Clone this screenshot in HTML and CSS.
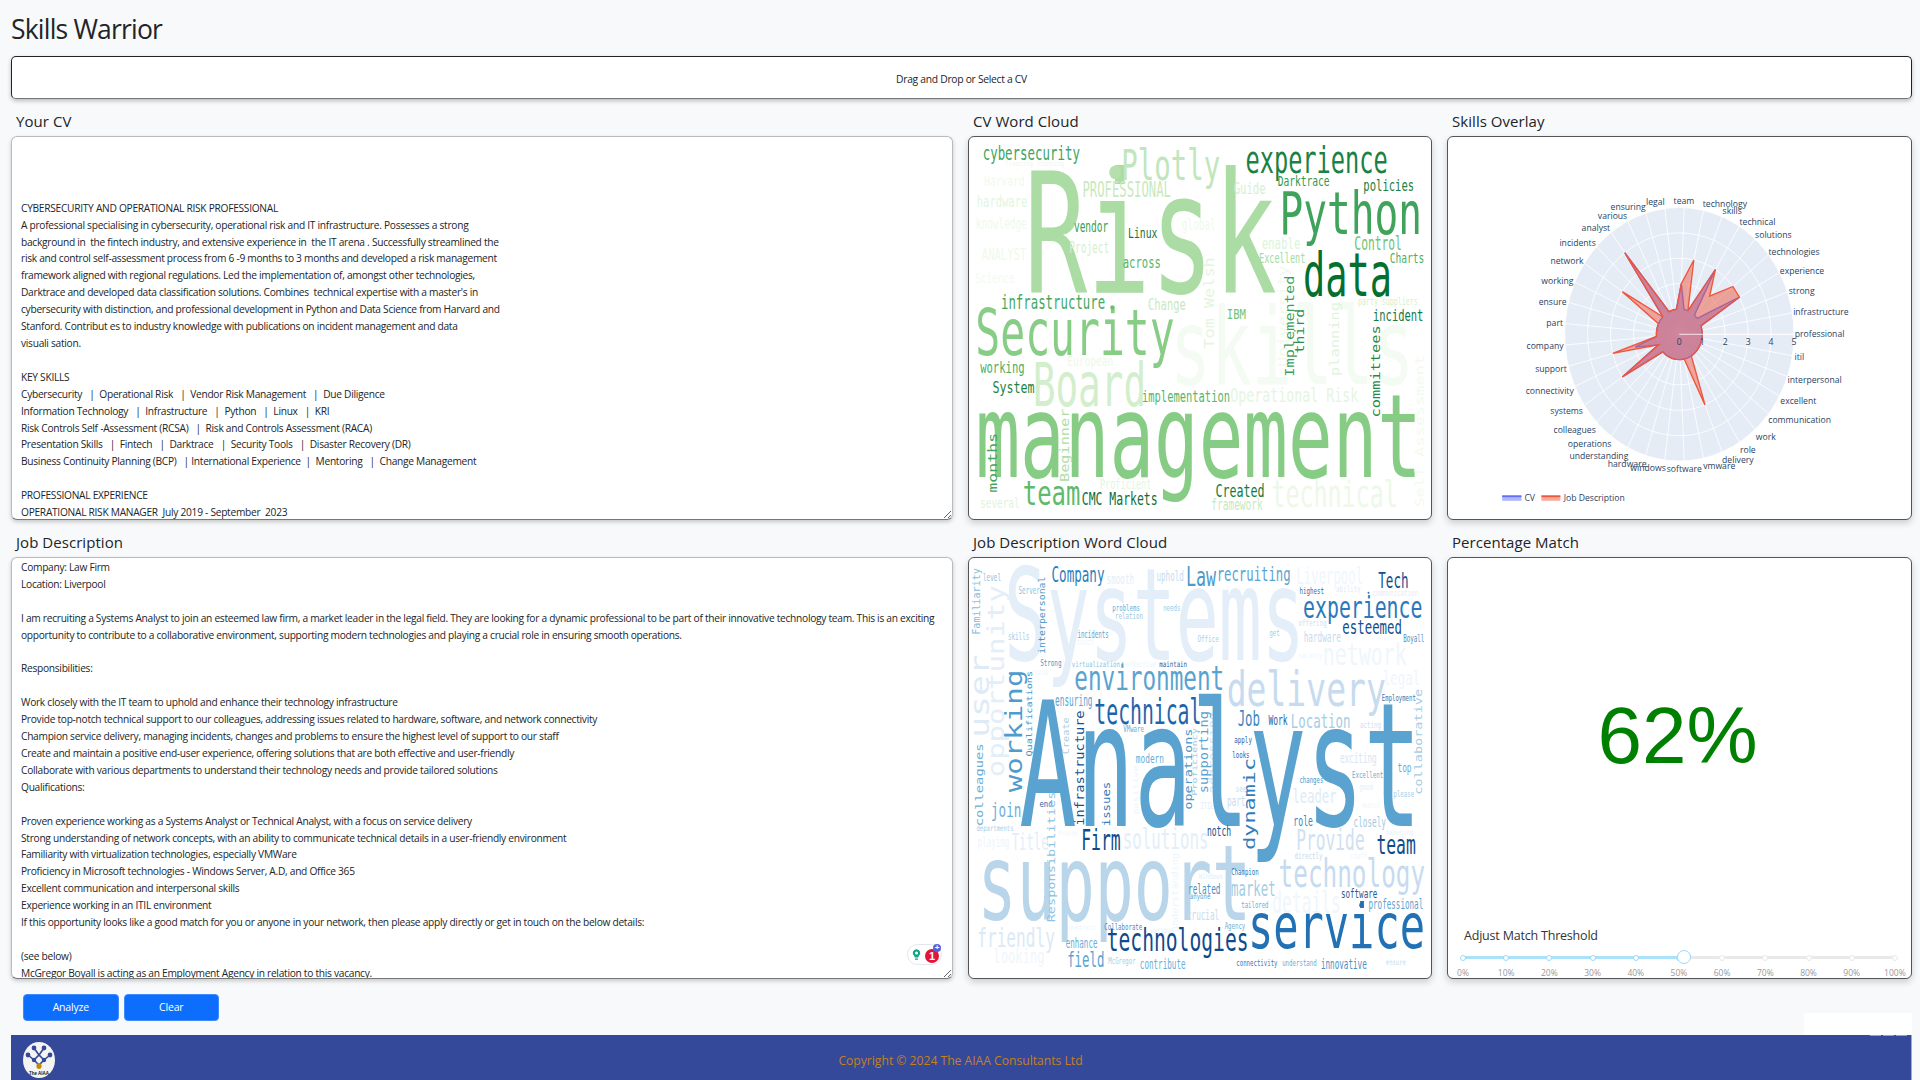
FILE: index.html
```html
<!DOCTYPE html>
<html lang="en">
<head>
<meta charset="utf-8">
<title>Skills Warrior</title>
<link rel="stylesheet" href="styles.css">
</head>
<body>
<div class="app">
  <h1 class="title">Skills Warrior</h1>
  <div class="dropzone">Drag and Drop or Select a CV</div>
  <div class="grid">
    <section class="panel">
      <h2 class="heading">Your CV</h2>
      <div class="card text-card cv-text">


CYBERSECURITY AND OPERATIONAL RISK PROFESSIONAL
A professional specialising in cybersecurity, operational risk and IT infrastructure. Possesses a strong
background in  the fintech industry, and extensive experience in  the IT arena . Successfully streamlined the
risk and control self-assessment process from 6 -9 months to 3 months and developed a risk management
framework aligned with regional regulations. Led the implementation of, amongst other technologies,
Darktrace and developed data classification solutions. Combines  technical expertise with a master's in
cybersecurity with distinction, and professional development in Python and Data Science from Harvard and
Stanford. Contribut es to industry knowledge with publications on incident management and data
visuali sation.

KEY SKILLS
Cybersecurity   |  Operational Risk   |  Vendor Risk Management   |  Due Diligence
Information Technology   |  Infrastructure   |  Python   |  Linux   |  KRI
Risk Controls Self -Assessment (RCSA)   |  Risk and Controls Assessment (RACA)
Presentation Skills   |  Fintech   |  Darktrace   |  Security Tools   |  Disaster Recovery (DR)
Business Continuity Planning (BCP)   | International Experience  |  Mentoring   |  Change Management

PROFESSIONAL EXPERIENCE
OPERATIONAL RISK MANAGER  July 2019 - September  2023</div>
    </section>
    <section class="panel">
      <h2 class="heading">CV Word Cloud</h2>
      <div class="card chart-card"><svg id="cloud-cv" class="chart" viewBox="25 48 1390 1154" preserveAspectRatio="none"></svg></div>
    </section>
    <section class="panel">
      <h2 class="heading">Skills Overlay</h2>
      <div class="card chart-card"><svg id="radar" class="chart" viewBox="22 48 1393 1154" preserveAspectRatio="none"></svg></div>
    </section>
    <section class="panel">
      <h2 class="heading">Job Description</h2>
      <div class="jd-wrap">
        <div class="card text-card jd-text">Company: Law Firm
Location: Liverpool

I am recruiting a Systems Analyst to join an esteemed law firm, a market leader in the legal field. They are looking for a dynamic professional to be part of their innovative technology team. This is an exciting
opportunity to contribute to a collaborative environment, supporting modern technologies and playing a crucial role in ensuring smooth operations.

Responsibilities:

Work closely with the IT team to uphold and enhance their technology infrastructure
Provide top-notch technical support to our colleagues, addressing issues related to hardware, software, and network connectivity
Champion service delivery, managing incidents, changes and problems to ensure the highest level of support to our staff
Create and maintain a positive end-user experience, offering solutions that are both effective and user-friendly
Collaborate with various departments to understand their technology needs and provide tailored solutions
Qualifications:

Proven experience working as a Systems Analyst or Technical Analyst, with a focus on service delivery
Strong understanding of network concepts, with an ability to communicate technical details in a user-friendly environment
Familiarity with virtualization technologies, especially VMWare
Proficiency in Microsoft technologies - Windows Server, A.D, and Office 365
Excellent communication and interpersonal skills
Experience working in an ITIL environment
If this opportunity looks like a good match for you or anyone in your network, then please apply directly or get in touch on the below details:

(see below)
McGregor Boyall is acting as an Employment Agency <span class="flag">in relation to</span> this vacancy.</div>
        <div class="assist">
          <svg class="assist-bulb" viewBox="0 0 12 16"><path d="M6 1a5 5 0 0 0-3 9l.8 2h4.4l.8-2A5 5 0 0 0 6 1zm0 3a2 2 0 1 1 0 4 2 2 0 0 1 0-4zM4 13.2h4V15H4z"/></svg>
          <span class="assist-count">1</span>
          <span class="assist-plus">+</span>
        </div>
      </div>
    </section>
    <section class="panel">
      <h2 class="heading">Job Description Word Cloud</h2>
      <div class="card chart-card"><svg id="cloud-jd" class="chart" viewBox="25 22 1390 1268" preserveAspectRatio="none"></svg></div>
    </section>
    <section class="panel">
      <h2 class="heading">Percentage Match</h2>
      <div class="card match-card">
        <div class="match-value">62%</div>
        <div class="threshold">
          <div class="threshold-label">Adjust Match Threshold</div>
          <div class="slider">
            <div class="rail"></div>
            <div class="rail-active"></div>
            <div class="marks">
              <div class="mark on"><i></i><span>0%</span></div>
              <div class="mark on"><i></i><span>10%</span></div>
              <div class="mark on"><i></i><span>20%</span></div>
              <div class="mark on"><i></i><span>30%</span></div>
              <div class="mark on"><i></i><span>40%</span></div>
              <div class="mark on"><i></i><span>50%</span></div>
              <div class="mark"><i></i><span>60%</span></div>
              <div class="mark"><i></i><span>70%</span></div>
              <div class="mark"><i></i><span>80%</span></div>
              <div class="mark"><i></i><span>90%</span></div>
              <div class="mark"><i></i><span>100%</span></div>
            </div>
            <div class="handle"></div>
          </div>
        </div>
      </div>
    </section>
  </div>
  <div class="actions">
    <div class="buttons">
      <button class="btn">Analyze</button>
      <button class="btn">Clear</button>
    </div>
    <div class="stub"></div>
  </div>
  <footer class="footer">
    <svg class="logo" viewBox="0 0 32 36">
      <ellipse cx="16" cy="18" rx="16" ry="18" fill="#f4f4f2"/>
      <g stroke="#35499b" stroke-width="1.6" fill="#35499b">
        <path d="M5 13l6 5 5-5 5 5 6-5M11 6l5 7 5-7M16 13l-5 5M16 13l5 5M11 18l5 5 5-5" fill="none"/>
        <circle cx="5" cy="13" r="1.6"/><circle cx="27" cy="13" r="1.6"/>
        <circle cx="11" cy="6" r="1.6"/><circle cx="21" cy="6" r="1.6"/>
        <circle cx="11" cy="18" r="1.4"/><circle cx="21" cy="18" r="1.4"/>
      </g>
      <ellipse cx="16" cy="24" rx="2.6" ry="3" fill="#c08a10"/>
      <text x="16" y="32.5" class="logo-text">The AIAA</text>
    </svg>
    <div class="copyright">Copyright © 2024 The AIAA Consultants Ltd</div>
    <div class="dashes"><i></i><i></i><i></i></div>
  </footer>
</div>
<script src="script.js"></script>
</body>
</html>
```
FILE: styles.css
```css
* { box-sizing: border-box; }
html, body { margin: 0; height: 100%; overflow: hidden; }
body {
  background: #f8f9fa;
  color: #212529;
  font-family: "Open Sans", "Noto Sans", "Liberation Sans", sans-serif;
}
.app { width: 1920px; height: 1080px; padding: 0 8px 0 11px; display: flex; flex-direction: column; }
.title { margin: 0; height: 56px; font-size: 26.5px; font-weight: 500; line-height: 58px; letter-spacing: -0.8px; }
.dropzone {
  height: 43px; display: flex; align-items: center; justify-content: center;
  background: #fff; border: 1px solid #222; border-bottom-color: #777; border-radius: 5px;
  box-shadow: 0 2px 4px rgba(0,0,0,.25);
  font-size: 10.3px; letter-spacing: -0.28px; padding-top: 2px;
}
.grid {
  display: grid; grid-template-columns: 942px 464px 465px; grid-template-rows: 421px 459px;
  column-gap: 15px;
}
.panel { display: flex; flex-direction: column; min-height: 0; }
.heading { margin: 0; height: 37px; padding: 12px 0 0 5px; font-size: 15px; font-weight: 400; line-height: 20px; letter-spacing: 0.05px; color: #212529; }
.card { flex: 1; min-height: 0; background: #fff; border-radius: 6px; overflow: hidden; }
.chart-card, .match-card { border: 1px solid #555; box-shadow: 0 3px 7px rgba(0,0,0,.18); }
.text-card {
  border: 1px solid #bbb; border-bottom-color: #777;
  box-shadow: 0 2px 4px rgba(0,0,0,.2);
  padding: 1px 9px 0; font-size: 10.2px; line-height: 16.9px; white-space: pre; resize: both; letter-spacing: -0.28px;
}
.cv-text { padding-top: 12px; }
.jd-wrap { position: relative; flex: 1; min-height: 0; display: flex; }
.jd-wrap .text-card { width: 100%; }
.flag { text-decoration: underline; text-decoration-color: #a9c7f5; text-underline-offset: 3px; }
.assist {
  position: absolute; left: 896px; top: 387px; width: 35px; height: 21px; border-radius: 11px;
  background: #fff; border: 1px solid #e4e6ee; display: flex; align-items: center; padding-left: 4px; gap: 4px;
}
.assist-bulb { width: 9px; height: 13px; fill: #11a683; }
.assist-count {
  width: 14px; height: 14px; border-radius: 50%; background: #e0163a; color: #fff; margin-top: 2px;
  font: 700 11px/14px "Liberation Sans", sans-serif; text-align: center;
}
.assist-plus {
  position: absolute; right: 0; top: -1px; width: 8px; height: 8px; border-radius: 50%; background: #5a5fd8;
  color: #fff; font: 700 8px/8px "Liberation Sans", sans-serif; text-align: center;
}
.chart { display: block; width: 100%; height: 100%; }
.cw { font-family: "DejaVu Sans Mono", monospace; }
.axis-label { font-family: "Open Sans", sans-serif; font-size: 26px; fill: #2a3f5f; text-anchor: middle; }
.legend-label { font-family: "Open Sans", sans-serif; font-size: 26px; fill: #2a3f5f; }
.match-card { display: flex; flex-direction: column; }
.match-value {
  flex: 1; display: flex; align-items: center; justify-content: center;
  font-family: "Liberation Sans", sans-serif; font-size: 80px; color: #008000; padding: 0 4px 13px 0;
}
.threshold { height: 51px; padding: 0 16px 0 15px; }
.threshold-label { font-size: 12.5px; line-height: 18px; margin-left: 1px; letter-spacing: -0.2px; color: #333; }
.slider { position: relative; height: 30px; margin-top: 7px; }
.rail, .rail-active { position: absolute; top: 4px; height: 3px; border-radius: 2px; left: 0; }
.rail { right: 0; background: #e9e9e9; }
.rail-active { width: 51%; background: #abe2fb; }
.marks { position: relative; display: flex; justify-content: space-between; }
.mark { width: 0; display: flex; flex-direction: column; align-items: center; }
.mark i { flex: none; width: 6px; height: 6px; margin-top: 3px; border-radius: 50%; background: #fff; border: 1px solid #e9e9e9; }
.mark.on i { border: 1.5px solid #96dbfa; }
.mark span { margin-top: 6px; font-size: 8.5px; line-height: 12px; color: #999; white-space: nowrap; }
.handle {
  position: absolute; top: -2px; left: 51%; width: 14px; height: 14px; margin-left: -6px;
  background: #fff; border: 1.5px solid #96dbfa; border-radius: 50%;
}
.actions { height: 56px; display: flex; justify-content: space-between; align-items: flex-start; }
.buttons { display: flex; gap: 5px; margin: 15px 0 0 12px; }
.btn {
  width: 95.5px; height: 27px; background: #0d6efd; color: #fff; border: 1px solid #3d8bfd; border-radius: 4px;
  font: 10.5px/1 "Open Sans", sans-serif; letter-spacing: -0.2px; padding: 0;
}
.stub { width: 108px; height: 22px; margin-top: 34px; background: #fff; }
.footer {
  position: relative; flex: none; height: 45px; background: #35499b; border-right: 1px solid #a0a8d0;
  display: flex; align-items: center; justify-content: center;
}
.logo { position: absolute; left: 12px; top: 7px; width: 32px; height: 36px; }
.logo-text { font: 700 4.5px "Liberation Sans", sans-serif; text-anchor: middle; fill: #111; }
.copyright { font-size: 12.2px; color: #c2801f; letter-spacing: -0.03px; margin-top: 5px; margin-left: -1px; }
.dashes { position: absolute; top: 0; right: 4px; display: flex; gap: 2px; }
.dashes i { width: 11px; height: 1px; background: #6fb0e8; }
```
FILE: script.js
```js
var NS = "http://www.w3.org/2000/svg";
function el(tag, attrs, parent, text) {
  var n = document.createElementNS(NS, tag);
  for (var k in attrs) n.setAttribute(k, attrs[k]);
  if (text) n.textContent = text;
  parent.appendChild(n);
  return n;
}
// horizontal word: [text, x0, x1, baseline, size, colour]
// vertical word:   [text, baselineX, yStart, yEnd, size, colour, 1]
// The extents are measured from the ink, so they are widened by the glyphs' side bearings.
function cloud(id, words, dots) {
  var svg = document.getElementById(id);
  words.forEach(function (w) {
    var a = { "class": "cw", "font-size": w[4], fill: w[5], lengthAdjust: "spacingAndGlyphs" };
    var len = w[6] ? w[2] - w[3] : w[2] - w[1];
    var adv = len / w[0].length;
    var lead = adv * 0.08, total = len + adv * 0.2;
    if (w[6]) {
      a.x = w[1]; a.y = w[2] + lead; a.textLength = total;
      a.transform = "rotate(-90 " + a.x + " " + a.y + ")";
    } else {
      a.x = w[1] - lead; a.y = w[3]; a.textLength = total;
    }
    el("text", a, svg, w[0]);
  });
  (dots || []).forEach(function (d) {
    el("ellipse", { cx: d[0], cy: d[1], rx: d[2], ry: d[2] * 1.15, fill: d[3] }, svg);
  });
}
cloud("cloud-cv", [
["skills",640,1350,795,322,"#f4fbf2"],["technical",938,1310,1165,110,"#edf8e9"],
["Board",222,550,860,180,"#d3eecd"],["Risk",205,930,520,505,"#aadca4"],
["Security",50,635,708,195,"#88cd86"],["management",55,1372,1075,350,"#86cc85"],
["cybersecurity",68,356,116,56,"#41a45f"],["Creating Stunning",135,310,137,22,"#eef8ea"],
["Plotly",487,775,178,130,"#c1e6bb"],["experience",860,1280,157,110,"#1b8145"],
["Harvard",72,190,195,44,"#f0f9ed"],["PROFESSIONAL",368,630,230,62,"#c7e9c0"],
["Guide",823,915,220,46,"#d5efcf"],["Darktrace",955,1108,195,44,"#2f984f"],
["policies",1213,1362,212,50,"#207f44"],["hardware",50,198,258,50,"#e4f5df"],
["Python",965,1380,340,178,"#3fa35b"],["knowledge",47,197,326,48,"#f0f9ed"],
["vendor",342,442,336,46,"#37a055"],["Linux",505,590,352,44,"#17733b"],
["global",667,765,330,50,"#f0f9ec"],["enable",907,1020,386,50,"#e0f3db"],
["Project",328,445,398,48,"#d5efcf"],["Control",1186,1325,390,56,"#72c375"],
["ANALYST",65,195,420,48,"#f0f9ec"],["Excellent",899,1035,430,42,"#a5db9f"],
["across",489,600,443,46,"#57b568"],["Charts",1292,1393,428,44,"#4aaf61"],
["Science",45,160,488,42,"#f3faf0"],["data",1035,1290,527,180,"#04702f"],
["infrastructure",123,432,568,58,"#45a75f"],["Change",565,675,572,48,"#c7e9c0"],
["party suppliers",1196,1374,555,30,"#d5efcf"],["IBM",802,856,597,42,"#73c476"],
["incident",1242,1390,604,46,"#137b3f"],["European",322,457,740,42,"#edf8e9"],
["working",60,190,762,50,"#4bae62"],["System",97,220,820,50,"#1e8346"],
["implementation",547,808,850,46,"#58b669"],["Operational Risk",813,1193,850,60,"#e5f5e0"],
["team",190,355,1160,100,"#5fba6d"],["CMC Markets",366,590,1160,52,"#0f6e38"],
["Proficient",420,572,1112,44,"#e5f5e0"],["several",60,175,1168,40,"#dff3da"],
["Created",768,912,1135,52,"#127a3c"],["framework",755,907,1175,46,"#c7e9c0"],
["Tom Welsh",762,685,415,40,"#e5f5e0",1],["University",985,740,440,40,"#f0f9ec",1],
["Implemented",1002,770,470,38,"#3aa05a",1],["third",1033,700,570,38,"#2d8f4e",1],
["planning",1138,768,550,38,"#e0f3db",1],["committees",1262,893,620,38,"#1f8a47",1],
["Self Assessment",1395,1165,710,38,"#f3faf0",1],["months",108,1120,945,36,"#42a65f",1],
["Beginner",327,1088,872,36,"#aedea7",1]
], [[465,155,18,"#b5e0ae"],[456,563,6,"#6abf71"]]);

cloud("cloud-jd", [
["Systems",140,1020,330,390,"#e3eef9"],["support",60,860,1115,315,"#b8d5ea"],
["delivery",805,1272,470,145,"#c6dbef"],["Liverpool",1012,1208,100,70,"#eff6fc"],
["network",1092,1338,345,90,"#eff6fc"],["legal",1272,1380,405,60,"#eff6fc"],
["user",85,560,320,80,"#deebf7",1],["opportunity",130,680,110,70,"#e3eef9",1],
["addressing",770,730,490,36,"#d0e1f2",1],["positive",533,795,650,22,"#eef5fc",1],
["Analyst",190,1365,830,525,"#5aa2cf"],
["Familiarity",58,252,55,30,"#85bcdc",1],["level",68,120,92,30,"#92c4de"],
["Server",175,237,132,30,"#92c4de"],["interpersonal",255,310,80,28,"#4a98c9",1],
["Company",275,430,95,66,"#2e7ebc"],["smooth",440,520,100,42,"#e3eef9"],
["uphold",590,670,90,40,"#c6dbef"],["Law",680,765,107,80,"#4d99ca"],
["recruiting",772,990,92,60,"#5ba3d0"],["Tech",1258,1345,114,62,"#14508f"],
["highest",1020,1092,132,28,"#2b6eb0"],["ability",1130,1202,124,28,"#deebf7"],
["communication",1240,1375,138,26,"#e3eef9"],["problems",457,538,183,28,"#6baed6"],
["relation",465,547,205,28,"#9ecae1"],["needs",610,660,183,26,"#9ecae1"],
["experience",1033,1385,202,90,"#2a79ba"],["esteemed",1150,1325,252,60,"#14508f"],
["offering",1017,1100,226,26,"#d0e1f2"],["skills",143,205,270,30,"#a5cde3"],
["incidents",352,444,265,30,"#5ca5d1"],["touch",350,400,286,26,"#f0f6fc"],
["Office",713,775,275,28,"#a9cfe5"],["get",930,958,258,28,"#a5cde3"],
["hardware",1033,1142,275,42,"#c6dbef"],["Boyall",1332,1394,276,30,"#5a8fc0"],
["vacancy",1017,1087,325,24,"#eff6fc"],["Strong",240,302,347,28,"#4a98c9"],
["virtualization",335,478,352,24,"#8abfdd"],["effective",497,587,352,24,"#eef5fc"],
["maintain",598,680,352,24,"#1f5d9e"],["environment",345,788,420,100,"#5aa3cf"],
["working",185,725,365,70,"#4f9bcb",1],["focus",215,262,375,24,"#eef5fc"],
["Qualifications",215,620,365,24,"#4a90c4",1],["ensuring",285,395,470,48,"#5ba3d0"],
["technical",405,720,522,105,"#1f65ab"],["Employment",1268,1368,455,26,"#3f74a8"],
["Job",835,898,530,66,"#3a87c1"],["Work",927,982,527,42,"#1f65ab"],
["Location",995,1170,535,60,"#a5cde3"],["collaborative",1388,735,420,34,"#a5cde3",1],
["acting",1202,1263,535,28,"#d0e1f2"],["VMware",490,550,548,26,"#6baed6"],
["Create",326,613,505,28,"#a9cfe5",1],["infrastructure",372,828,485,36,"#17528f",1],
["supporting",743,730,487,36,"#5ba3d0",1],["apply",824,875,582,28,"#1f65ab"],
["looks",818,868,625,26,"#1f65ab"],["modern",528,610,640,38,"#6baed6"],
["operations",695,780,540,34,"#4a98c9",1],["Proficiency",710,738,538,22,"#9ecae1",1],
["exciting",1142,1250,640,40,"#d7e6f5"],["top",1315,1355,668,38,"#6baed6"],
["Excellent",1178,1270,687,28,"#6baed6"],["dynamic",885,900,630,46,"#2f7dbb",1],
["changes",1020,1090,702,28,"#4a98c9"],["good",1200,1240,723,26,"#e3eef9"],
["please",1303,1363,745,26,"#a5cde3"],["leader",1000,1128,762,60,"#deebf7"],
["see",828,858,730,26,"#c6dbef"],["part",802,855,770,40,"#c6dbef"],
["ITIL",722,760,780,26,"#e3eef9"],["match",1210,1262,776,24,"#f0f6fc"],
["colleagues",68,830,585,34,"#6baed6",1],["join",93,180,805,60,"#6baed6"],
["end",238,275,775,26,"#1f65ab"],["Responsibilities",285,1120,730,30,"#90c3df",1],
["issues",450,830,700,34,"#2f7dbb",1],["notch",742,812,862,40,"#14508f"],
["role",1002,1058,832,40,"#3a87c1"],["closely",1183,1278,835,42,"#9ecae1"],
["departments",48,158,847,24,"#abd0e6"],["Proven",295,352,860,24,"#f0f6fc"],
["playing",52,145,895,42,"#eef5fc"],["Title",155,262,905,70,"#e3eef9"],
["Firm",365,478,905,84,"#0f4a8a"],["solutions",490,742,900,84,"#e3eef9"],
["Provide",1012,1212,905,84,"#d0e1f2"],["team",1253,1366,915,80,"#0f4a8a"],
["managing",1280,1360,857,24,"#eaf2fb"],["directly",1005,1087,930,26,"#c6dbef"],
["staff",1172,1222,930,26,"#eff6fc"],["technology",960,1392,1015,120,"#c6dbef"],
["Windows",717,788,990,24,"#e3eef9"],["Champion",815,895,980,26,"#2b6eb0"],
["market",815,945,1042,64,"#a5cde3"],["related",685,780,1035,40,"#4a90c4"],
["anyone",690,750,1052,24,"#5aa2cf"],["details",940,1140,1095,90,"#f0f6fc"],
["software",1145,1252,1048,38,"#2a5a90"],["professional",1228,1390,1083,40,"#5ba3d0"],
["tailored",845,925,1078,26,"#6baed6"],["crucial",682,776,1115,42,"#c6dbef"],
["service",870,1388,1200,190,"#2271b5"],["Agency",795,855,1143,26,"#6baed6"],
["Collaborate",433,545,1145,26,"#4a90c4"],["contract",325,405,1145,22,"#eef5fc"],
["various",570,640,1155,24,"#e3eef9"],["friendly",52,280,1195,80,"#dbe9f6"],
["enhance",317,410,1200,42,"#6baed6"],["technologies",442,862,1210,95,"#0f4a8a"],
["understanding",655,1150,915,26,"#eef5fc",1],["looking",100,250,1245,60,"#f0f6fc"],
["field",322,430,1257,64,"#5ba3d0"],["McGregor",445,525,1248,26,"#a9cfe5"],
["contribute",540,675,1262,40,"#6baed6"],["connectivity",830,952,1255,26,"#2f7dbb"],
["understand",968,1070,1255,26,"#6baed6"],["innovative",1085,1220,1262,40,"#4a90c4"],
["ensure",1280,1338,1250,24,"#c6dbef"]
], [[1227,127,3,"#2e7ebc"],[487,340,3,"#8abfdd"],[1205,1070,6,"#2b6eb0"]]);

(function radar() {
  var svg = document.getElementById("radar");
  var cx = 718, cy = 644, ux = 69, uy = 76.6, n = 37;
  var labels = [
    ["professional",1140,652],["infrastructure",1144,585],["strong",1086,521],["experience",1087,461],
    ["technologies",1063,404],["solutions",1001,353],["technical",953,313],["skills",877,280],
    ["technology",855,260],["team",732,251],["legal",646,254],["ensuring",564,269],["various",517,296],
    ["analyst",467,332],["incidents",412,377],["network",380,431],["working",351,491],["ensure",337,556],
    ["part",343,619],["company",314,689],["support",332,759],["connectivity",328,824],["systems",379,885],
    ["colleagues",403,941],["operations",448,985],["understanding",476,1021],["hardware",561,1045],
    ["windows",624,1058],["software",733,1060],["vmware",838,1052],["delivery",894,1034],["role",924,1004],
    ["work",978,963],["communication",1080,913],["excellent",1076,854],["interpersonal",1125,790],["itil",1079,722]
  ];
  var jd = {}, cv = {};
  jd[3] = 3; jd[4] = 3; jd[5] = 2; jd[6] = 3; jd[8] = 3; jd[9] = 2; jd[13] = 4; jd[15] = 3; jd[20] = 3; jd[22] = 3; jd[30] = 3;
  cv[3] = 3; cv[6] = 3; cv[9] = 2; cv[13] = 4; cv[20] = 2; cv[22] = 3;
  function pt(i, r) {
    var a = i * 2 * Math.PI / n;
    return (cx + r * ux * Math.cos(a)).toFixed(1) + "," + (cy - r * uy * Math.sin(a)).toFixed(1);
  }
  el("ellipse", { cx: cx, cy: cy, rx: 5 * ux, ry: 5 * uy, fill: "#e5ecf6" }, svg);
  for (var i = 0; i < n; i++) {
    var p = pt(i, 5).split(",");
    el("line", { x1: cx, y1: cy, x2: p[0], y2: p[1], stroke: "#fff", "stroke-width": 2.5 }, svg);
  }
  for (var r = 1; r <= 5; r++) {
    el("ellipse", { cx: cx, cy: cy, rx: r * ux, ry: r * uy, fill: "none", stroke: "#fff", "stroke-width": 2.5 }, svg);
  }
  function poly(map, colour) {
    var pts = [];
    for (var i = 0; i < n; i++) pts.push(pt(i, map[i] || 1));
    el("polygon", { points: pts.join(" "), fill: colour, "fill-opacity": .5, stroke: colour, "stroke-width": 4, "stroke-linejoin": "miter" }, svg);
  }
  poly(cv, "#636efa");
  poly(jd, "#ef553b");
  el("line", { x1: cx, y1: cy, x2: cx + 5 * ux, y2: cy, stroke: "#fff", "stroke-width": 3, "stroke-opacity": .8 }, svg);
  for (var t = 0; t <= 5; t++) {
    el("text", { "class": "axis-label", x: cx + t * ux, y: 675 }, svg, String(t));
  }
  labels.forEach(function (l) {
    el("text", { "class": "axis-label", x: l[1], y: l[2] }, svg, l[0]);
  });
  el("rect", { x: 185, y: 1130, width: 58, height: 17, fill: "#636efa", "fill-opacity": .5 }, svg);
  el("rect", { x: 185, y: 1131, width: 58, height: 5, fill: "#636efa" }, svg);
  el("text", { "class": "legend-label", x: 252, y: 1147 }, svg, "CV");
  el("rect", { x: 303, y: 1130, width: 57, height: 17, fill: "#ef553b", "fill-opacity": .5 }, svg);
  el("rect", { x: 303, y: 1131, width: 57, height: 5, fill: "#ef553b" }, svg);
  el("text", { "class": "legend-label", x: 370, y: 1147 }, svg, "Job Description");
})();
```
